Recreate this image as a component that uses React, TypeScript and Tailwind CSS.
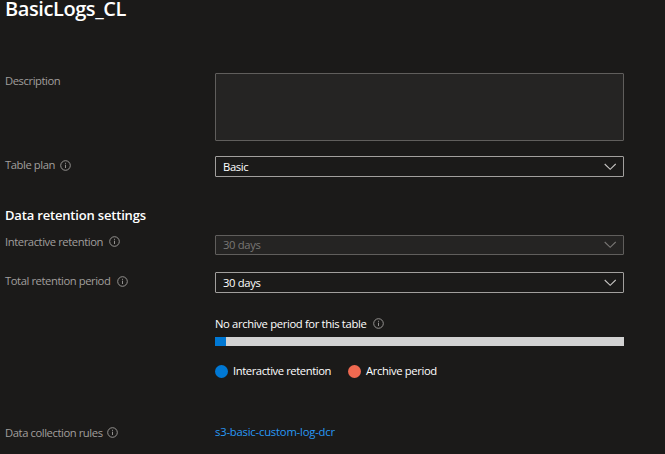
import type { ReactNode } from "react";

function Info({ className = "" }: { className?: string }) {
  return (
    <svg viewBox="0 0 11 11" className={`h-[11px] w-[11px] shrink-0 ${className}`} fill="none" stroke="#a19f9d">
      <circle cx="5.5" cy="5.5" r="4.8" strokeWidth="0.9" />
      <path d="M5.5 4.7V8M5.5 2.8V3.8" strokeWidth="0.9" />
    </svg>
  );
}

function Row({ label, className, labelClass = "", children }: { label?: ReactNode; className: string; labelClass?: string; children: ReactNode }) {
  return (
    <div className={`grid grid-cols-[210px_409px] ${className}`}>
      <div className={`flex h-4 items-center whitespace-nowrap text-[#a19f9d] ${labelClass}`}>{label}</div>
      {children}
    </div>
  );
}

function Select({ value, disabled = false, className }: { value: string; disabled?: boolean; className: string }) {
  const tone = disabled
    ? "border-[#605e5c] bg-[#252423] text-[#797775]"
    : "border-[#a19f9d] bg-[#1b1a19] text-white";
  return (
    <div className={`flex items-center justify-between rounded-[1px] border pl-[7px] pr-[7px] ${tone} ${className}`}>
      <span className="tracking-[-0.35px]">{value}</span>
      <svg viewBox="0 0 12 8" className={`h-2 w-3 ${disabled ? "text-[#797775]" : "text-[#c8c6c4]"}`} fill="none" stroke="currentColor">
        <path d="M0.7 1L6.2 6.3L11.7 1" strokeWidth="1.1" />
      </svg>
    </div>
  );
}

export default function App() {
  return (
    <main className="h-[454px] w-[665px] overflow-hidden bg-[#1b1a19] pl-[5px] font-['Open_Sans','Noto_Sans',sans-serif] text-[11.25px] leading-4 tracking-[-0.43px] text-white">
      <h1 className="h-[73px] text-[20px] leading-[18px] font-semibold"><span className="tracking-[-0.42px]">BasicLogs_CL</span></h1>
      <Row className="h-[83px]" label={<span>Description</span>}>
        <div className="h-[68px] rounded-[1px] border border-[#605e5c] bg-[#252423]" />
      </Row>
      <Row className="h-[50px]" labelClass="mt-px" label={<><span className="w-[49px]">Table plan</span><Info className="ml-[6px]" /></>}>
        <Select value="Basic" className="h-[21px]" />
      </Row>
      <h2 className="h-[29px] text-[13px] leading-[18px] font-semibold tracking-[-0.18px]"><span>Data retention settings</span></h2>
      <Row className="h-[37px]" labelClass="-mt-px" label={<><span className="w-[98px]">Interactive retention</span><Info className="-mt-[2px] ml-[6px]" /></>}>
        <Select value="30 days" disabled className="h-5" />
      </Row>
      <Row className="h-[44px]" labelClass="mt-px" label={<><span className="w-[105px]">Total retention period</span><Info className="ml-[7px]" /></>}>
        <Select value="30 days" className="h-[21px]" />
      </Row>
      <Row className="h-[109px]">
        <div>
          <div className="flex h-[21px] items-start"><span className="w-[152px] tracking-[-0.35px]">No archive period for this table</span><Info className="ml-[6px] mt-[2px]" /></div>
          <div className="flex h-[9px] bg-[#d2d2d2]"><div className="w-[11px] bg-[#0078d4]" /></div>
          <div className="mt-[17px] flex items-center">
            <i className="mr-[5px] h-[13px] w-[13px] rounded-full bg-[#0078d4]" />
            <span className="w-[115px]">Interactive retention</span>
            <i className="mr-[5px] h-[13px] w-[13px] rounded-full bg-[#ef6950]" />
            <span className="tracking-[-0.37px]">Archive period</span>
          </div>
        </div>
      </Row>
      <Row className="h-[20px]" label={<><span className="w-[98px]">Data collection rules</span><Info className="-mt-px ml-[4px]" /></>}>
        <a className="-mt-px tracking-[-0.2px] text-[#2899f5]">s3-basic-custom-log-dcr</a>
      </Row>
    </main>
  );
}
